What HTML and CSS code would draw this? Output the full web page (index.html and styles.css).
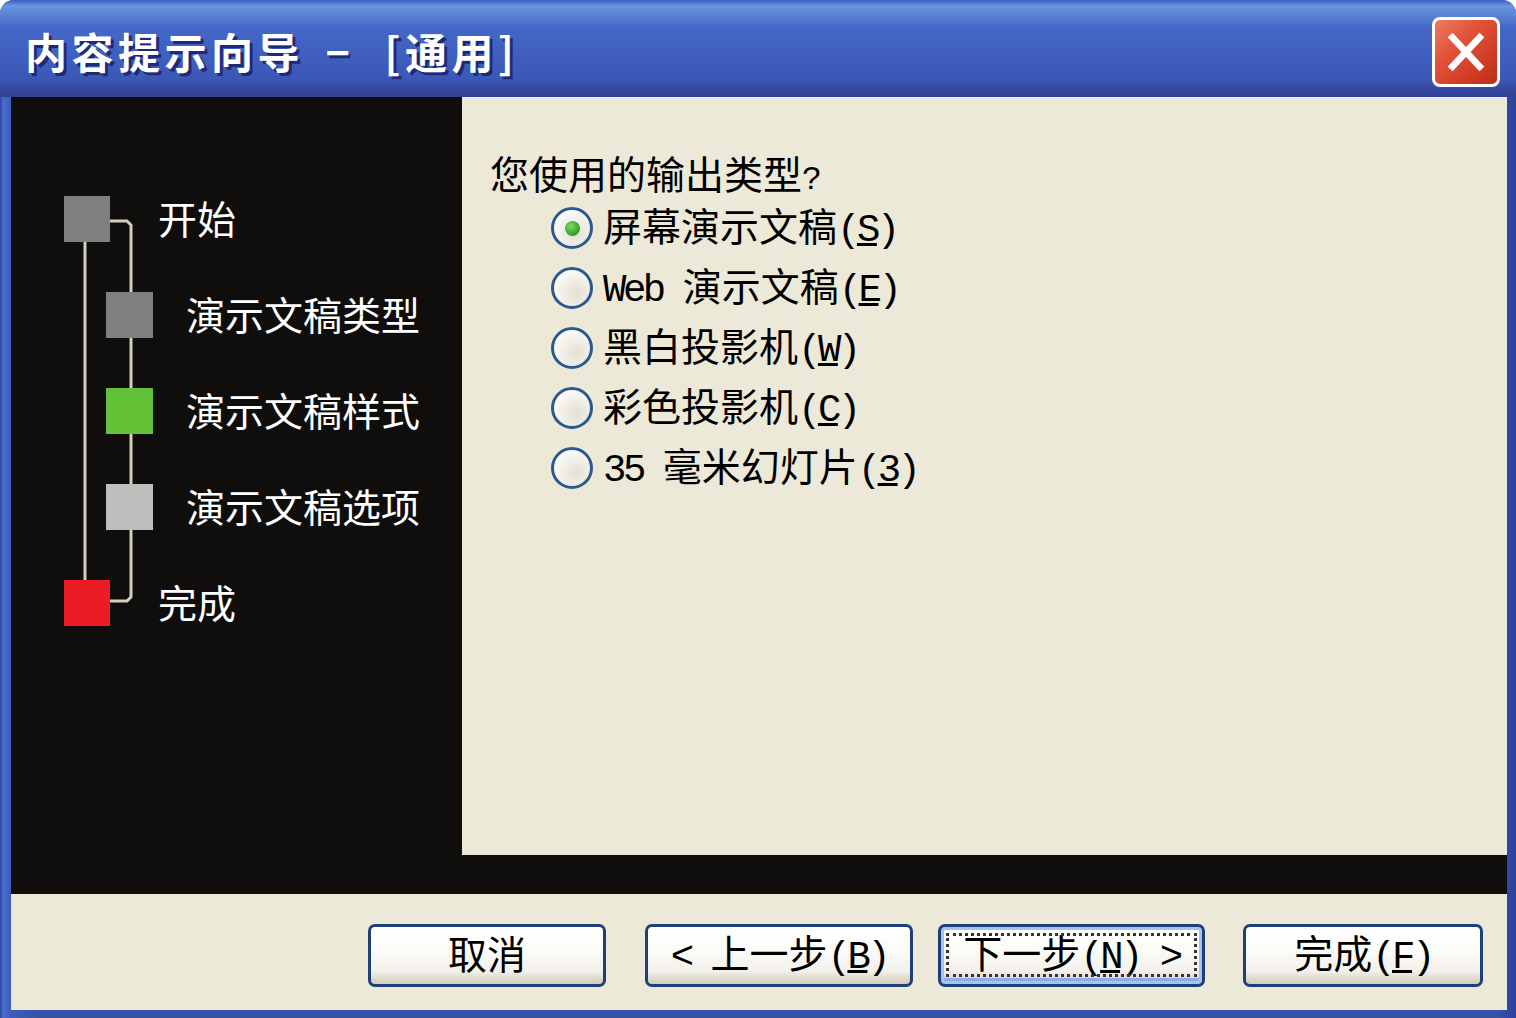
FILE: index.html
```html
<!DOCTYPE html>
<html lang="zh-CN">
<head>
<meta charset="utf-8">
<title>内容提示向导</title>
<link rel="stylesheet" href="styles.css">
</head>
<body>
<div class="window">
  <div class="titlebar">
    <div class="title"><span>内容提示向导</span><span class="dash">－</span><span class="sub">[通用]</span></div>
    <div class="close">
      <svg width="64" height="66" viewBox="0 0 64 66"><path d="M18 18 L46 48 M46 18 L18 48" stroke="#fff" stroke-width="7" stroke-linecap="square" fill="none"/></svg>
    </div>
  </div>
  <div class="frame">
    <div class="main">
      <div class="steps">
        <svg class="tree" width="451" height="758" viewBox="0 0 451 758">
          <path d="M74 145 V483" stroke="#d2d0bc" stroke-width="3" fill="none"/>
          <path d="M99 124 H116 L120 128 V500 L116 504 H99" stroke="#d2d0bc" stroke-width="3" fill="none"/>
        </svg>
        <div class="step outer"><span class="sq gray"></span><span class="lbl">开始</span></div>
        <div class="step inner"><span class="sq gray"></span><span class="lbl">演示文稿类型</span></div>
        <div class="step inner"><span class="sq green"></span><span class="lbl">演示文稿样式</span></div>
        <div class="step inner"><span class="sq light"></span><span class="lbl">演示文稿选项</span></div>
        <div class="step outer"><span class="sq red"></span><span class="lbl">完成</span></div>
      </div>
      <div class="content">
        <div class="question">您使用的输出类型<span class="qm">?</span></div>
        <div class="radios">
          <div class="opt"><span class="radio checked"></span><span class="txt">屏幕演示文稿<span class="mn">(<u>S</u>)</span></span></div>
          <div class="opt"><span class="radio"></span><span class="txt"><span class="mn">Web </span>演示文稿<span class="mn">(<u>E</u>)</span></span></div>
          <div class="opt"><span class="radio"></span><span class="txt">黑白投影机<span class="mn">(<u>W</u>)</span></span></div>
          <div class="opt"><span class="radio"></span><span class="txt">彩色投影机<span class="mn">(<u>C</u>)</span></span></div>
          <div class="opt"><span class="radio"></span><span class="txt"><span class="mn">35 </span>毫米幻灯片<span class="mn">(<u>3</u>)</span></span></div>
        </div>
      </div>
    </div>
    <div class="strip"></div>
    <div class="buttons">
      <div class="btn b-cancel"><span class="bt">取消</span></div>
      <div class="btn b-back"><span class="bt"><span class="mn">&lt; </span>上一步<span class="mn">(<u>B</u>)</span></span></div>
      <div class="btn b-next default"><span class="bt">下一步<span class="mn">(<u>N</u>) &gt;</span></span></div>
      <div class="btn b-finish"><span class="bt">完成<span class="mn">(<u>F</u>)</span></span></div>
    </div>
  </div>
</div>
</body>
</html>
```

FILE: styles.css
```css
* { box-sizing: border-box; }
html, body {
  margin: 0;
  padding: 0;
  background: #ffffff;
}
body {
  width: 1516px;
  height: 1018px;
  overflow: hidden;
  font-family: "Noto Sans CJK SC", "Noto Sans", sans-serif;
}
.window {
  width: 1516px;
  height: 1018px;
  display: flex;
  flex-direction: column;
  border-radius: 14px 14px 0 0;
  overflow: hidden;
  background: #3550ad;
}
.titlebar {
  height: 97px;
  flex: none;
  display: flex;
  align-items: center;
  justify-content: space-between;
  padding: 4px 16px 0 25px;
  background: linear-gradient(to bottom,
    #3b5bc4 0px, #6a95e0 6px, #5b85d6 14px, #4467c6 28px,
    #3f5dbc 60px, #3c58b6 78px, #34489f 90px, #2f4196 97px);
}
.title {
  display: flex;
  color: #ffffff;
  font-weight: 700;
  font-size: 42px;
  letter-spacing: 4.5px;
  line-height: 56px;
  white-space: pre;
  text-shadow: 3px 3px 0 #1c2a78;
}
.dash {
  margin-left: 12px;
  transform: scaleX(0.7);
}
.sub {
  margin-left: 22px;
}
.close {
  width: 68px;
  height: 70px;
  margin-top: 2px;
  border: 3px solid #ffffff;
  border-radius: 8px;
  background: linear-gradient(135deg, #ec7d62 0%, #e2553a 35%, #cf3a22 75%, #b8321c 100%);
  display: flex;
  align-items: center;
  justify-content: center;
}
.frame {
  flex: 1;
  display: flex;
  flex-direction: column;
  padding: 0 9px 8px 11px;
  background: linear-gradient(to right, #2c44a0 0px, #4a6ccb 3px, #3d5dbd 11px, #3550ad 40px, #3550ad 1500px, #2b3f98 1516px);
}
.main {
  height: 758px;
  display: flex;
}
.steps {
  position: relative;
  width: 451px;
  height: 758px;
  background: #0f0e0d;
  padding: 99px 0 0 53px;
  display: flex;
  flex-direction: column;
  gap: 50px;
}
.tree {
  position: absolute;
  left: 0;
  top: 0;
}
.step {
  position: relative;
  height: 46px;
  display: flex;
  align-items: center;
}
.sq {
  width: 46px;
  height: 46px;
  flex: none;
}
.step.inner .sq { margin-left: 42px; width: 47px; }
.lbl {
  color: #ffffff;
  font-size: 39px;
  line-height: 46px;
  padding-bottom: 5px;
  white-space: nowrap;
}
.step.outer .lbl { margin-left: 48px; }
.step.inner .lbl { margin-left: 33px; }
.gray { background: #7e7f80; }
.green { background: #62c134; }
.light { background: #bebebc; }
.red { background: #ec1c24; }
.content {
  flex: 1;
  background: #ece9d8;
  padding: 49px 0 0 28px;
}
.question {
  height: 52px;
  font-size: 39px;
  line-height: 52px;
  color: #000;
  white-space: nowrap;
}
.qm {
  font-family: "Liberation Mono", "DejaVu Sans Mono", monospace;
  font-size: 33px;
  line-height: 1;
}
.radios {
  padding-left: 61px;
}
.opt {
  height: 60px;
  display: flex;
  align-items: center;
}
.radio {
  width: 42px;
  height: 42px;
  flex: none;
  border-radius: 50%;
  border: 3px solid #2c5a8e;
  background: radial-gradient(circle at 62% 65%, #e3e0d3 0%, #f1efe8 45%, #ffffff 80%);
  display: flex;
  align-items: center;
  justify-content: center;
}
.radio.checked::after {
  content: "";
  width: 15px;
  height: 15px;
  border-radius: 50%;
  background: radial-gradient(circle at 40% 35%, #7fdc6a 0%, #33a52e 60%, #1f8a1e 100%);
}
.txt {
  margin-left: 10px;
  font-size: 39px;
  line-height: 50px;
  padding-bottom: 6px;
  color: #000;
  white-space: pre;
}
.mn {
  font-family: "Liberation Mono", "DejaVu Sans Mono", monospace;
  font-size: 39px;
  letter-spacing: -3.5px;
  line-height: 1;
}
.strip {
  height: 39px;
  flex: none;
  background: #0f0e0d;
}
.buttons {
  flex: 1;
  background: #ece9d8;
  display: flex;
  justify-content: flex-end;
  align-items: flex-start;
  padding: 30px 24px 0 0;
}
.btn {
  position: relative;
  height: 63px;
  border: 3px solid #1f3f78;
  border-radius: 7px;
  background: linear-gradient(to bottom, #ffffff 0%, #fbfbf8 40%, #f1f0ea 78%, #dcd7c6 92%, #d4cfbd 100%);
  display: flex;
  align-items: center;
  justify-content: center;
  font-size: 39px;
  color: #000;
  white-space: pre;
}
.bt {
  line-height: 50px;
  padding-bottom: 8px;
}
.b-cancel { width: 238px; }
.b-back { width: 268px; margin-left: 39px; }
.b-next { width: 267px; margin-left: 25px; }
.b-finish { width: 240px; margin-left: 38px; }
.btn.default {
  box-shadow: inset 0 0 0 3px #a6c2ef, inset 0 -3px 0 3px #8aaee6;
}
.btn.default::after {
  content: "";
  position: absolute;
  left: 5px;
  top: 6px;
  right: 5px;
  bottom: 7px;
  border: 3px dotted #3a3230;
}
```
